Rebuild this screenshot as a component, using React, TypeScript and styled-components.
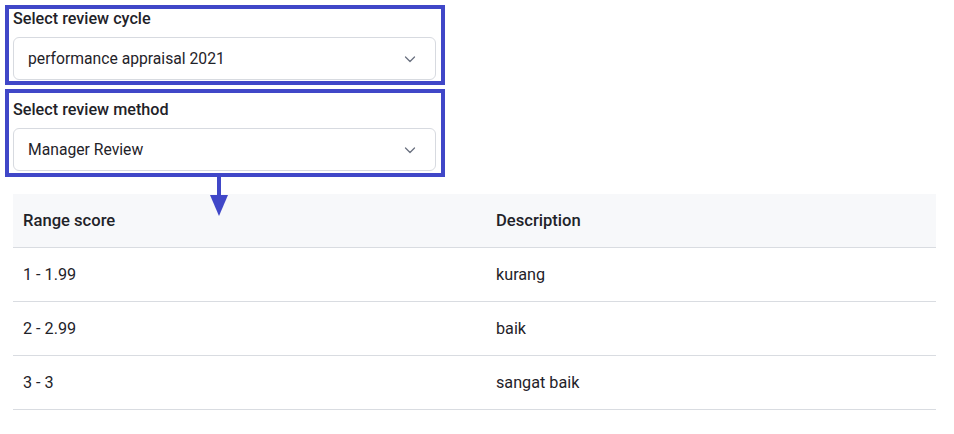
import React from "react";
import styled, { createGlobalStyle } from "styled-components";

const Global = createGlobalStyle`
  html, body { margin: 0; padding: 0; background: #fff; }
  body { font-family: Roboto, "Noto Sans", sans-serif; color: #1f2329; }
`;

const Page = styled.div`
  display: flex;
  flex-direction: column;
  padding: 5px 18px 0 5px;
  width: 954px;
  box-sizing: border-box;
`;

const Annot = styled.div<{ $top: number; $bottom: number }>`
  width: 440px;
  box-sizing: border-box;
  border: 4px solid #4047c8;
  padding: ${(p) => p.$top}px 5px ${(p) => p.$bottom}px 4px;
  display: flex;
  flex-direction: column;
  gap: 9px;
  & + & { margin-top: 4px; }
`;

const Label = styled.div`
  font-size: 16.2px;
  font-weight: 500;
  line-height: 18px;
  color: #1f2329;
`;

const Select = styled.div`
  height: 43px;
  box-sizing: border-box;
  border: 1px solid #d7dae0;
  border-radius: 6px;
  display: flex;
  align-items: center;
  justify-content: space-between;
  padding: 0 17px 0 14px;
  font-size: 15.7px;
  color: #1f2329;
`;

const ArrowWrap = styled.div`
  position: relative;
  height: 0;
`;

const Arrow = styled.svg`
  position: absolute;
  left: 201px;
  top: 0;
  z-index: 2;
`;

const Table = styled.div`
  margin: 17px 0 0 8px;
  display: flex;
  flex-direction: column;
`;

const Row = styled.div<{ $head?: boolean }>`
  display: grid;
  grid-template-columns: 473px 1fr;
  height: 54px;
  align-items: center;
  border-bottom: 1px solid #d9dce1;
  background: ${(p) => (p.$head ? "#f7f8fa" : "#fff")};
  font-size: ${(p) => (p.$head ? 16.6 : 16.2)}px;
  font-weight: ${(p) => (p.$head ? 500 : 400)};
  color: #1f2329;
  box-sizing: border-box;
`;

const Cell = styled.div`
  padding-left: 10px;
`;

const Chevron = () => (
  <svg width="16" height="16" viewBox="0 0 16 16" fill="none">
    <path d="M3.5 6l4.5 4.5L12.5 6" stroke="#6b7280" strokeWidth="1.3" strokeLinecap="round" strokeLinejoin="round" />
  </svg>
);

const rows = [
  ["1 - 1.99", "kurang"],
  ["2 - 2.99", "baik"],
  ["3 - 3", "sangat baik"],
];

export default function App() {
  return (
    <>
      <Global />
      <Page>
        <Annot $top={1} $bottom={1}>
          <Label>Select review cycle</Label>
          <Select>
            performance appraisal 2021
            <Chevron />
          </Select>
        </Annot>
        <Annot $top={8} $bottom={2}>
          <Label>Select review method</Label>
          <Select>
            Manager Review
            <Chevron />
          </Select>
        </Annot>
        <ArrowWrap>
          <Arrow width="26" height="42" viewBox="0 0 26 42">
            <rect x="11" y="0" width="4" height="20" fill="#4047c8" />
            <polygon points="4,18 22,18 13,39" fill="#4047c8" />
          </Arrow>
        </ArrowWrap>
        <Table>
          <Row $head>
            <Cell>Range score</Cell>
            <Cell>Description</Cell>
          </Row>
          {rows.map(([a, b]) => (
            <Row key={a}>
              <Cell>{a}</Cell>
              <Cell>{b}</Cell>
            </Row>
          ))}
        </Table>
      </Page>
    </>
  );
}
